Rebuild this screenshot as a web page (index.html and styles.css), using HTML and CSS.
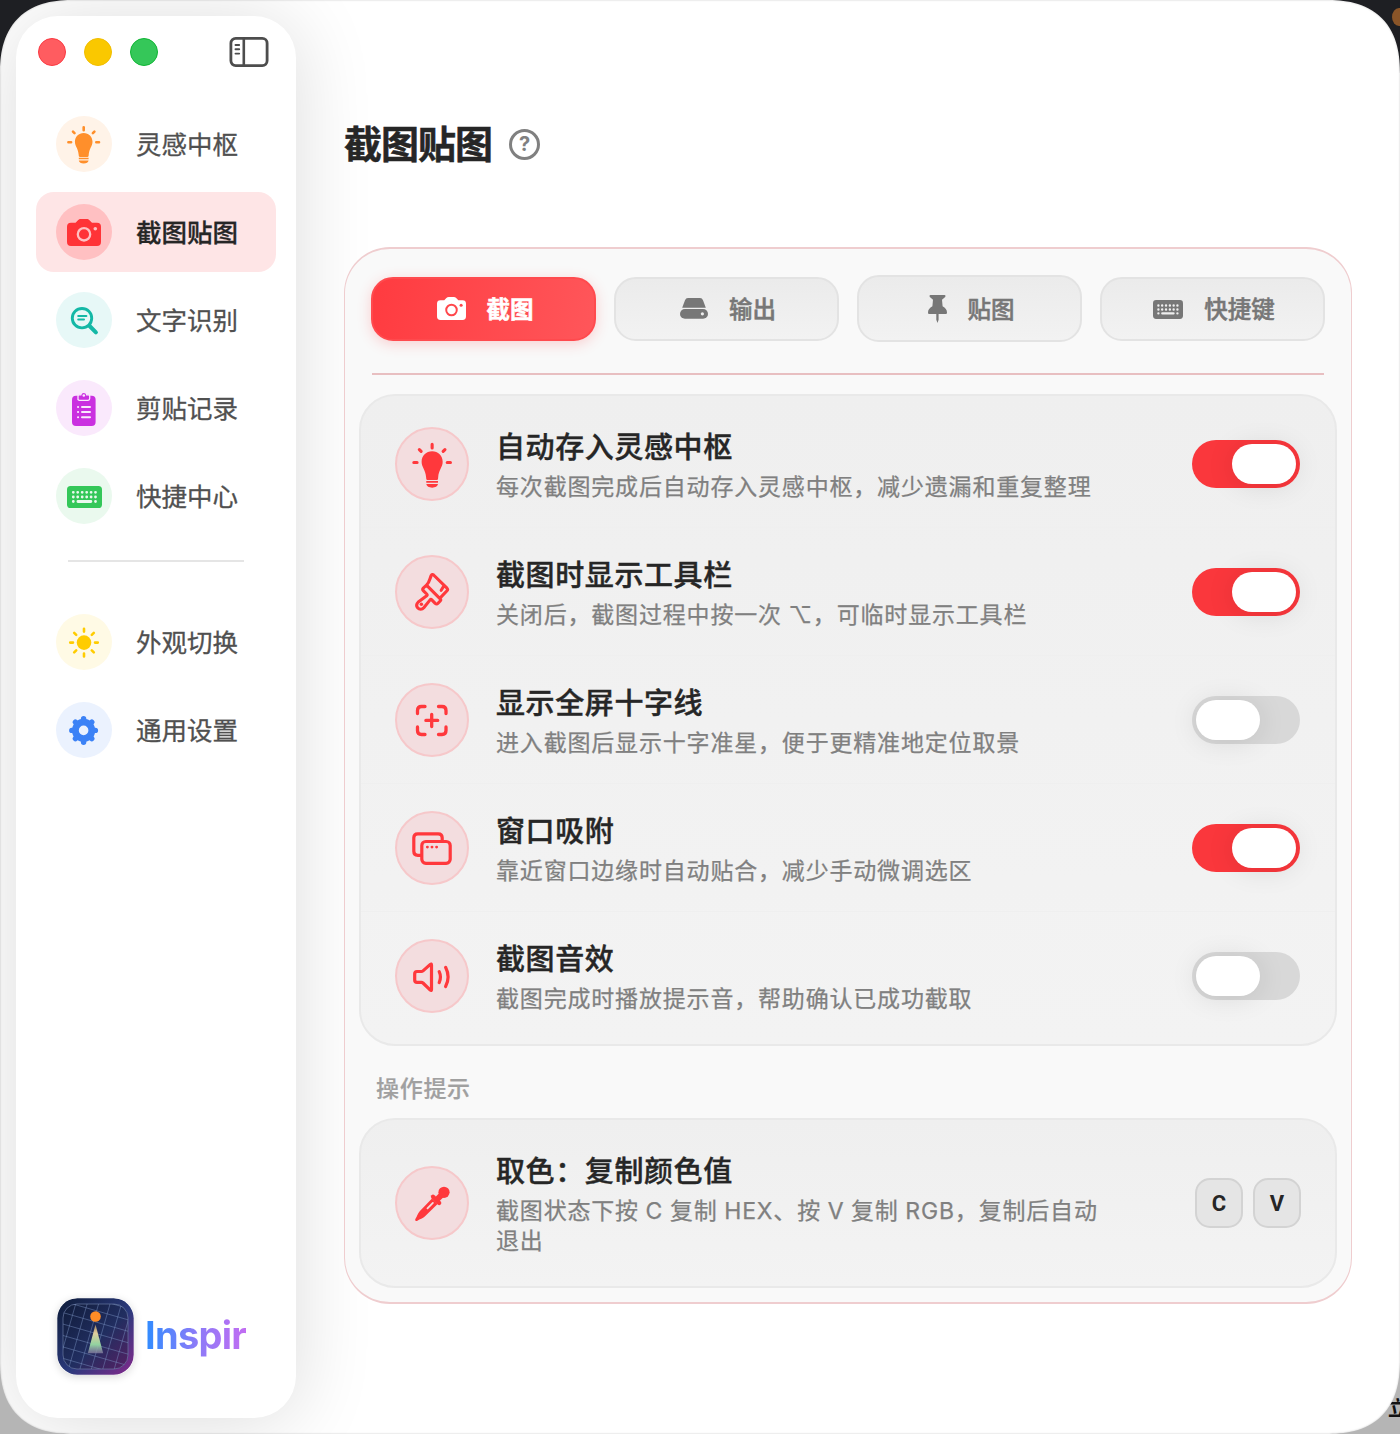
FILE: index.html
```html
<!DOCTYPE html>
<html lang="zh-CN">
<head>
<meta charset="utf-8">
<meta name="viewport" content="width=device-width, initial-scale=1.0">
<title>Inspir</title>
<link rel="stylesheet" href="styles.css">
</head>
<body>
<!-- shared icons -->
<svg class="defs" width="0" height="0">
	<symbol id="bulb" viewBox="0 0 56 56">
		<path fill="currentColor" d="M27.7 17c-5 0-8.8 3.9-8.8 8.7 0 4.600 3.300 6.300 3.800 13.300 0 1.200.4 2 1.200 2h7.600c.8 0 1.200-.8 1.200-2 .5-7 3.800-8.700 3.800-13.300 0-4.800-3.800-8.700-8.800-8.700zM22.800 41.800h9.800v1.500h-9.800zM22.800 44.400h9.800c-.3 1.900-2.200 3-4.900 3s-4.600-1.100-4.900-3z"/>
		<path class="line" stroke-width="2.600" d="M27.700 11.200v3M12.400 26.300h2.700M40.300 26.300h2.700M17 15.600l1.500 1.500M38.400 15.600l-1.500 1.500"/>
	</symbol>
	<symbol id="camera" viewBox="0 0 34 27">
		<path fill="currentColor" d="M4 3.700h4.500L11 1.200C11.800.4 12.600 0 13.800 0h5.900c1.200 0 2 .4 2.800 1.200L25 3.700h5a4 4 0 0 1 4 4V23a4 4 0 0 1-4 4H4a4 4 0 0 1-4-4V7.700a4 4 0 0 1 4-4z"/>
		<circle class="cut-line" cx="17" cy="15.300" r="6.200" stroke-width="2.300"/>
		<circle class="cut" cx="28.300" cy="9.700" r="1.800"/>
	</symbol>
	<symbol id="keyboard" viewBox="0 0 35 22">
		<rect width="35" height="22" rx="3.600" fill="currentColor"/>
		<path class="cut-line" stroke-width="2.800" d="M6.300 6.300h0M10.700 6.300h0M15.200 6.300h0M19.700 6.300h0M24.100 6.300h0M28.500 6.300h0M6.300 11h0M10.700 11h0M15.200 11h0M19.700 11h0M24.100 11h0M28.500 11h0M6.300 15.500h0M10.900 15.500h13M28.500 15.500h0"/>
	</symbol>
</svg>

<div class="desktop">
<span class="desktop-spot"></span>
<span class="desktop-text">立</span>
<div class="window">
	<aside class="sidebar">
		<div class="titlebar">
			<i class="light red"></i>
			<i class="light yellow"></i>
			<i class="light green"></i>
			<svg class="toggle-side" width="40" height="32" viewBox="0 0 40 32">
				<rect class="line" stroke-width="2.800" x="1.900" y="2.400" width="36.200" height="27.200" rx="4.800"/>
				<path class="line" stroke-width="2.600" d="M14.800 3v26"/>
				<path class="line" stroke-width="1.900" d="M6.500 9h3.700M6.500 13.300h3.700M6.500 17.600h3.700"/>
			</svg>
		</div>

		<nav class="nav">
			<a class="nav-item orange">
				<span class="nav-icon"><svg width="56" height="56"><use href="#bulb"/></svg></span><span class="nav-text">灵感中枢</span>
			</a>
			<a class="nav-item red active">
				<span class="nav-icon"><svg width="34" height="27"><use href="#camera"/></svg></span><span class="nav-text">截图贴图</span>
			</a>
			<a class="nav-item teal">
				<span class="nav-icon"><svg width="56" height="56" viewBox="0 0 56 56">
					<circle class="line" stroke-width="2.900" cx="26" cy="26.200" r="9.700"/>
					<path class="line" stroke-width="4" d="M33.600 34l6.300 6.400"/>
					<path class="line" stroke-width="2" d="M22.200 24h8.200M22.200 27.600h5.800"/>
				</svg></span><span class="nav-text">文字识别</span>
			</a>
			<a class="nav-item purple">
				<span class="nav-icon"><svg width="56" height="56" viewBox="0 0 56 56">
					<rect x="16" y="15.800" width="23.600" height="30.200" rx="4" fill="currentColor"/>
					<path class="clip" stroke-width="1.300" d="M22 20V16q0-1.200 1.200-1.200h1.600C25 13.200 26 12.400 27.700 12.400s2.900.8 3 2.400h1.600q1.400 0 1.400 1.200V18.600q0 1.800-1.600 1.800h-8.700q-1.400 0-1.400-1.600z"/>
					<circle class="cut" cx="27.800" cy="15.500" r="1.300"/>
					<path class="cut-line" stroke-width="2" d="M22 27h.1M26 27h8M22 32.100h.1M26 32.100h8M22 37.200h.1M26 37.200h8"/>
				</svg></span><span class="nav-text">剪贴记录</span>
			</a>
			<a class="nav-item green">
				<span class="nav-icon"><svg class="keys-icon" width="35" height="22"><use href="#keyboard"/></svg></span><span class="nav-text">快捷中心</span>
			</a>
			<hr>
			<a class="nav-item yellow">
				<span class="nav-icon"><svg width="56" height="56" viewBox="0 0 56 56">
					<circle cx="28" cy="28.600" r="7.300" fill="currentColor"/>
					<path class="line" stroke-width="2.600" d="M28 14.800v2.800M28 39.600v2.800M14.200 28.600h2.800M39 28.600h2.800M18.200 18.800l2 2M35.800 36.400l2 2M37.800 18.800l-2 2M20.200 36.400l-2 2"/>
				</svg></span><span class="nav-text">外观切换</span>
			</a>
			<a class="nav-item blue">
				<span class="nav-icon"><svg width="56" height="56" viewBox="0 0 56 56">
					<circle cx="27.600" cy="28.400" r="8.200" fill="none" stroke="currentColor" stroke-width="6.800"/>
					<path class="line" stroke-width="5.400" d="M27.600 18.500v-1.900M27.600 38.300v1.900M17.700 28.400h-1.900M37.500 28.400h1.900M20.600 21.400l-1.200-1.200M34.600 35.400l1.200 1.200M34.600 21.400l1.200-1.200M20.600 35.400l-1.200 1.200"/>
				</svg></span><span class="nav-text">通用设置</span>
			</a>
		</nav>

		<div class="brand">
			<svg class="logo" width="77" height="77" viewBox="0 0 77 77">
				<defs>
					<linearGradient id="logoBg" x1="0" y1="0" x2="1" y2="1">
						<stop offset="0" stop-color="#0d1b38"/>
						<stop offset=".55" stop-color="#2b3a7c"/>
						<stop offset="1" stop-color="#84298c"/>
					</linearGradient>
					<linearGradient id="logoIn" x1="0" y1="0" x2="1" y2="1">
						<stop offset="0" stop-color="#101c3b"/>
						<stop offset=".55" stop-color="#212e60"/>
						<stop offset="1" stop-color="#552063"/>
					</linearGradient>
					<linearGradient id="beam" x1="0" y1="0" x2="0" y2="1">
						<stop offset="0" stop-color="#e8b86c" stop-opacity=".6"/>
						<stop offset=".3" stop-color="#e2cf9e"/>
						<stop offset=".7" stop-color="#92d2a0"/>
						<stop offset="1" stop-color="#8f86a8" stop-opacity=".7"/>
					</linearGradient>
					<clipPath id="logoClip"><rect x="6" y="6" width="65" height="65" rx="14"/></clipPath>
				</defs>
				<rect x=".3" y=".3" width="76.400" height="76.400" rx="20" fill="url(#logoBg)"/>
				<rect x="6" y="6" width="65" height="65" rx="14" fill="url(#logoIn)" stroke="#68779f" stroke-opacity=".7"/>
				<g clip-path="url(#logoClip)">
					<path transform="rotate(16 38.500 38.500)" fill="none" stroke="#7f98c8" stroke-opacity=".5" stroke-width=".8" d="M-11.500-12v100M-.5-12v100M10.500-12v100M21.500-12v100M32.500-12v100M43.500-12v100M54.500-12v100M65.500-12v100M76.500-12v100M-12-8.500h100M-12 2.500h100M-12 13.500h100M-12 24.500h100M-12 35.500h100M-12 46.500h100M-12 57.500h100M-12 68.500h100"/>
				</g>
				<path fill="url(#beam)" d="M38.500 26.500l7.700 28.700H30.800z"/>
				<circle cx="38.500" cy="18.500" r="5.300" fill="#ff8c26"/>
			</svg>
			<span class="brand-name">Inspir</span>
		</div>
	</aside>

	<main class="main">
		<header class="header">
			<h1>截图贴图</h1>
			<span class="help">?</span>
		</header>

		<section class="panel">
			<div class="tabs">
				<button class="tab active">
					<svg width="29" height="23"><use href="#camera"/></svg><span>截图</span>
				</button>
				<button class="tab">
					<svg width="28" height="21" viewBox="0 0 28 21">
						<path fill="currentColor" d="M2.200 9.700L5 2.300Q5.800 0 8 0h12q2.200 0 3 2.300l2.800 7.400z"/>
						<rect y="11" width="28" height="9.800" rx="4.900" fill="currentColor"/>
						<circle class="cut" cx="22.400" cy="15.800" r="1.600"/>
					</svg><span>输出</span>
				</button>
				<button class="tab tall">
					<svg width="19" height="28" viewBox="0 0 19 28">
						<path fill="currentColor" d="M2.500 0h14q1 0 1 1t-1.200 1.800L14 4.800l.6 6.400c2.800 1.400 4.400 3.600 4.400 6.200 0 1-.6 1.500-1.500 1.500h-16C.6 18.900 0 18.400 0 17.400c0-2.600 1.600-4.800 4.400-6.200L5 4.800 2.700 2.800Q1.500 2 1.500 1t1-1zM8.300 19h2.300v5.800L9.500 28l-1.200-3.200z"/>
					</svg><span>贴图</span>
				</button>
				<button class="tab">
					<svg class="keys-icon" width="30" height="19"><use href="#keyboard"/></svg><span>快捷键</span>
				</button>
			</div>
			<div class="divider"></div>

			<div class="group">
				<div class="row">
					<span class="row-icon"><svg width="67" height="67"><use href="#bulb"/></svg></span>
					<div class="info">
						<h2>自动存入灵感中枢</h2>
						<p>每次截图完成后自动存入灵感中枢，减少遗漏和重复整理</p>
					</div>
					<span class="switch on"></span>
				</div>
				<div class="row">
					<span class="row-icon"><svg width="74" height="74" viewBox="0 0 74 74">
						<path class="line" stroke-width="3.100" d="M31.500 30.200C34.600 27.400 34.800 23.500 36.200 20.500q1-1.800 2.400-.5L52 33.200q1.200 1.300 0 2.500l-6.800 7.200M31.500 30.200l13.700 13.700M31.500 30.200l-3 2.600q-1.500 1.500 0 3l3.200 3.200q1 1 0 1.800L23.300 47c-2 2-2 4.300-.5 6s4.200 1.800 6-.3l6.300-7.800q.8-1 1.700-.1l3.400 3.500q1.500 1.400 2.800 0l2.200-2.300q1-1 0-2.100M48.800 31l-2.600 4.300"/>
						<circle cx="26.400" cy="49.300" r="1.700" fill="currentColor"/>
					</svg></span>
					<div class="info">
						<h2>截图时显示工具栏</h2>
						<p>关闭后，截图过程中按一次 ⌥，可临时显示工具栏</p>
					</div>
					<span class="switch on"></span>
				</div>
				<div class="row">
					<span class="row-icon"><svg width="74" height="74" viewBox="0 0 74 74">
						<path class="line" stroke-width="3.300" d="M22.500 30.500v-3q0-4 4-4h3.500M43.500 23.500h3.500q4 0 4 4v3M51 44v3.500q0 4-4 4h-3.500M30 51.500h-3.500q-4 0-4-4V44M36.700 31.500v12M30.900 37.400h11.800"/>
					</svg></span>
					<div class="info">
						<h2>显示全屏十字线</h2>
						<p>进入截图后显示十字准星，便于更精准地定位取景</p>
					</div>
					<span class="switch"></span>
				</div>
				<div class="row">
					<span class="row-icon"><svg width="74" height="74" viewBox="0 0 74 74">
						<path class="line" stroke-width="3.200" d="M26 44.300h-3.200q-4 0-4-4V26.800q0-4 4-4h20.400q4 0 4 4v3"/>
						<rect class="line" stroke-width="3.200" x="26.800" y="30.500" width="28.400" height="21.800" rx="4"/>
						<path class="line" stroke-width="2.900" d="M32.400 36.100h0M37 36.100h0M41.600 36.100h0"/>
					</svg></span>
					<div class="info">
						<h2>窗口吸附</h2>
						<p>靠近窗口边缘时自动贴合，减少手动微调选区</p>
					</div>
					<span class="switch on"></span>
				</div>
				<div class="row">
					<span class="row-icon"><svg width="74" height="74" viewBox="0 0 74 74">
						<path class="line" stroke-width="3.200" d="M22 32.500h4.300q1 0 1.700-.6l7.300-6.500q1.200-1 1.200.6v24.500q0 1.600-1.200.6L28 44q-.7-.6-1.700-.6H22q-2.300 0-2.300-2.300v-6.300q0-2.300 2.300-2.300zM44.200 32.600q2.500 5.400 0 11M50.600 28.300q5 9.700 0 19.300"/>
					</svg></span>
					<div class="info">
						<h2>截图音效</h2>
						<p>截图完成时播放提示音，帮助确认已成功截取</p>
					</div>
					<span class="switch"></span>
				</div>
			</div>

			<div class="label">操作提示</div>

			<div class="group">
				<div class="row tip">
					<span class="row-icon"><svg width="74" height="74" viewBox="0 0 74 74">
						<circle cx="49" cy="26.300" r="5.600" fill="currentColor"/>
						<path class="line" stroke-width="6" d="M47 28.500l-4.500 4.500"/>
						<path class="line" stroke-width="4.200" d="M38 30.700l6.200 6.200"/>
						<path fill="currentColor" d="M37 32.400l5.600 5.600-12.800 12.600c-2 2-4.800 2.400-7.400 4.200q-1.200.6-1.900-.1t0-1.900c1.800-2.600 2.200-5.600 4.200-7.600z"/>
						<path class="slit" stroke-width="1.800" d="M32.500 42.300l5.400-5.400"/>
					</svg></span>
					<div class="info">
						<h2>取色：复制颜色值</h2>
						<p>截图状态下按 C 复制 HEX、按 V 复制 RGB，复制后自动退出</p>
					</div>
					<div class="keys"><kbd>C</kbd><kbd>V</kbd></div>
				</div>
			</div>
		</section>
	</main>
</div>
</div>
</body>
</html>
```
FILE: styles.css
```css
* {
	box-sizing: border-box;
}

body, h1, h2, p, hr {
	margin: 0;
	padding: 0;
	border: 0;
}

body {
	font-family: Inter, "Noto Sans CJK SC", sans-serif;
	color: #262626;
}

.defs {
	position: absolute;
}

svg {
	display: block;
	flex: none;
}

.line {
	fill: none;
	stroke: currentColor;
	stroke-linecap: round;
	stroke-linejoin: round;
}

.cut {
	fill: var(--cut);
}

.cut-line {
	fill: none;
	stroke: var(--cut);
	stroke-linecap: round;
}

.clip {
	fill: currentColor;
	stroke: var(--cut);
}

/* window */
.desktop {
	position: relative;
	width: 1400px;
	height: 1434px;
	overflow: hidden;
	background: linear-gradient(#1e1f23 50%, #b5b5b5 50%);
}

.desktop-spot {
	position: absolute;
	top: 8px;
	right: -6px;
	width: 14px;
	height: 18px;
	border-radius: 50%;
	background: #8a5528;
}

.desktop-text {
	position: absolute;
	right: -8px;
	bottom: 13px;
	font-size: 20px;
	line-height: 24px;
	font-weight: bold;
	color: #111;
}

.window {
	position: relative;
	display: flex;
	width: 1400px;
	height: 1434px;
	padding: 16px;
	overflow: hidden;
	background: #fff;
	border-radius: 58px;
	box-shadow: inset 0 0 2px rgba(0,0,0,.25);
}

@supports (corner-shape: superellipse(1.3)) {
	.window {
		border-radius: 74px;
		corner-shape: superellipse(1.3);
	}
}

/* sidebar */
.sidebar {
	display: flex;
	flex-direction: column;
	flex: none;
	width: 280px;
	background: #fff;
	border-radius: 42px;
	box-shadow: 0 4px 80px rgba(0,0,0,.14);
}

.titlebar {
	display: flex;
	align-items: center;
	gap: 18px;
	height: 72px;
	padding: 0 27px 0 22px;
}

.light {
	width: 28px;
	height: 28px;
	border-radius: 50%;
	border: 1px solid;
}

.light.red {
	background: #ff5c60;
	border-color: #fa3a42;
}

.light.yellow {
	background: #fac800;
	border-color: #f0bd00;
}

.light.green {
	background: #35c759;
	border-color: #10b534;
}

.toggle-side {
	margin-left: auto;
	color: #4d4d4d;
}

.nav {
	display: flex;
	flex-direction: column;
	gap: 8px;
	padding: 16px 20px 0;
}

.nav-item {
	display: flex;
	align-items: center;
	gap: 24px;
	height: 80px;
	padding: 0 20px;
	border-radius: 18px;
	font-size: 25.5px;
	color: #505050;
	white-space: nowrap;
	-webkit-text-stroke: .3px;
}

.nav-text {
	padding-bottom: 3px;
}

.nav-item.active {
	background: #fee5e6;
	font-weight: 500;
	color: #262626;
}

.nav-icon {
	display: flex;
	align-items: center;
	justify-content: center;
	width: 56px;
	height: 56px;
	border-radius: 50%;
	background: var(--cut);
}

.nav .orange { --cut: #fff3e8; }
.nav .red { --cut: #ffc0c2; }
.nav .teal { --cut: #e7f8f7; }
.nav .purple { --cut: #fae9fc; }
.nav .green { --cut: #eaf9ee; }
.nav .yellow { --cut: #fffae5; }
.nav .blue { --cut: #ebf2fe; }
.orange .nav-icon { color: #ff8f2b; }
.red .nav-icon { color: #ff3337; }
.teal .nav-icon { color: #14b8a6; }
.purple .nav-icon { color: #ca30e0; }
.green .nav-icon { color: #34c759; }
.yellow .nav-icon { color: #ffcc00; }
.blue .nav-icon { color: #3c82f6; }

.keys-icon {
	margin-top: 2px;
}

.nav hr {
	height: 2px;
	margin: 16px 32px 32px;
	background: #e5e5e5;
}

.brand {
	display: flex;
	align-items: center;
	gap: 11px;
	margin-top: auto;
	padding: 0 0 43px 41px;
}

.logo {
	border-radius: 20px;
	box-shadow: 0 2px 8px rgba(0,0,0,.15);
}

.brand-name {
	margin-bottom: 3px;
	font-size: 38px;
	line-height: 48px;
	font-weight: 700;
	letter-spacing: -.7px;
	color: transparent;
	background: linear-gradient(90deg, #2f8cff, #8a7bf8 50%, #c26df2);
	-webkit-background-clip: text;
	background-clip: text;
}

/* main */
.main {
	flex: 1;
	padding: 0 32px 0 48px;
}

.header {
	display: flex;
	align-items: flex-start;
	gap: 17px;
	height: 231px;
	padding-top: 26px;
}

.header h1 {
	margin-top: 74px;
	font-size: 38px;
	line-height: 56px;
	letter-spacing: -1px;
	font-weight: 700;
	-webkit-text-stroke: .5px;
}

.help {
	margin-top: 87px;
	width: 31px;
	height: 31px;
	border: 3px solid #808080;
	border-radius: 50%;
	font-size: 20px;
	line-height: 25px;
	font-weight: 700;
	text-align: center;
	color: #808080;
}

.panel {
	width: 1008px;
	height: 1057px;
	padding: 26px 14px 0;
	background: #f9f9f9;
	border: solid #efcdcf;
	border-width: 2px 1px;
	border-radius: 46px;
}

.tabs {
	display: flex;
	align-items: center;
	gap: 18px;
	height: 67px;
	padding: 0 12px;
}

.tab {
	display: flex;
	flex: 1;
	align-items: center;
	justify-content: center;
	gap: 21px;
	height: 64px;
	padding: 0 0 0 3px;
	border: 2px solid #e3e3e3;
	border-radius: 22px;
	background: linear-gradient(#ebebeb, #f2f2f2);
	font: 500 23.500px Inter, "Noto Sans CJK SC", sans-serif;
	color: #777;
	-webkit-text-stroke: .5px;
	--cut: #eee;
}

.tab span {
	padding-bottom: 2px;
}

.tab.tall {
	height: 67px;
}

.tab.active {
	--cut: #ff474b;
	border-color: #ff4a4e;
	background: linear-gradient(100deg, #ff3b40, #ff565a);
	box-shadow: 0 3px 14px rgba(255,60,64,.22);
	font-weight: 700;
	color: #fff;
}

.divider {
	height: 2px;
	margin: 31px 13px 19px;
	background: #e8bfc1;
}

.group {
	padding: 4px 0;
	background: linear-gradient(#efefef, #f3f3f3);
	border: 2px solid #e9e9e9;
	border-radius: 36px;
}

.row {
	display: flex;
	align-items: center;
	height: 128px;
	padding: 0 35px 0 34px;
}

.row + .row {
	box-shadow: 0 -1px #efefef;
}

.row.tip {
	height: 158px;
}

.row-icon {
	display: flex;
	align-items: center;
	justify-content: center;
	flex: none;
	width: 74px;
	height: 74px;
	margin-right: 27px;
	border: 2px solid #f6c8ca;
	border-radius: 50%;
	background: #f3dddf;
	color: #ff383c;
}

.row-icon .slit {
	fill: none;
	stroke: #f3dddf;
	stroke-linecap: round;
}

.info {
	width: 610px;
}

.info h2 {
	font-size: 29px;
	line-height: 42px;
	font-weight: 500;
	letter-spacing: .6px;
	-webkit-text-stroke: .4px;
}

.info p {
	font-size: 23px;
	line-height: 30px;
	letter-spacing: .82px;
	word-spacing: -.6px;
	margin-top: 3px;
	color: #808080;
	-webkit-text-stroke: .25px;
}

.switch {
	display: flex;
	width: 108px;
	height: 48px;
	margin-left: auto;
	padding: 4px;
	border-radius: 24px;
	background: #d8d8d8;
}

.switch:before {
	content: "";
	width: 64px;
	height: 40px;
	border-radius: 20px;
	background: #fff;
	box-shadow: 0 2px 28px rgba(0,0,0,.1);
}

.switch.on {
	justify-content: flex-end;
	background: #fa373c;
}

.label {
	height: 72px;
	padding: 25px 0 0 17px;
	font-size: 23px;
	line-height: 36px;
	letter-spacing: .7px;
	font-weight: 500;
	color: #a0a0a0;
	-webkit-text-stroke: .2px;
}

.keys {
	display: flex;
	gap: 10px;
	margin-left: auto;
	margin-right: -1px;
}

kbd {
	width: 48px;
	height: 50px;
	border: 2px solid #d3d3d3;
	border-radius: 15px;
	background: #e5e5e5;
	font: 700 22px/48px Roboto, sans-serif;
	text-align: center;
}
```
